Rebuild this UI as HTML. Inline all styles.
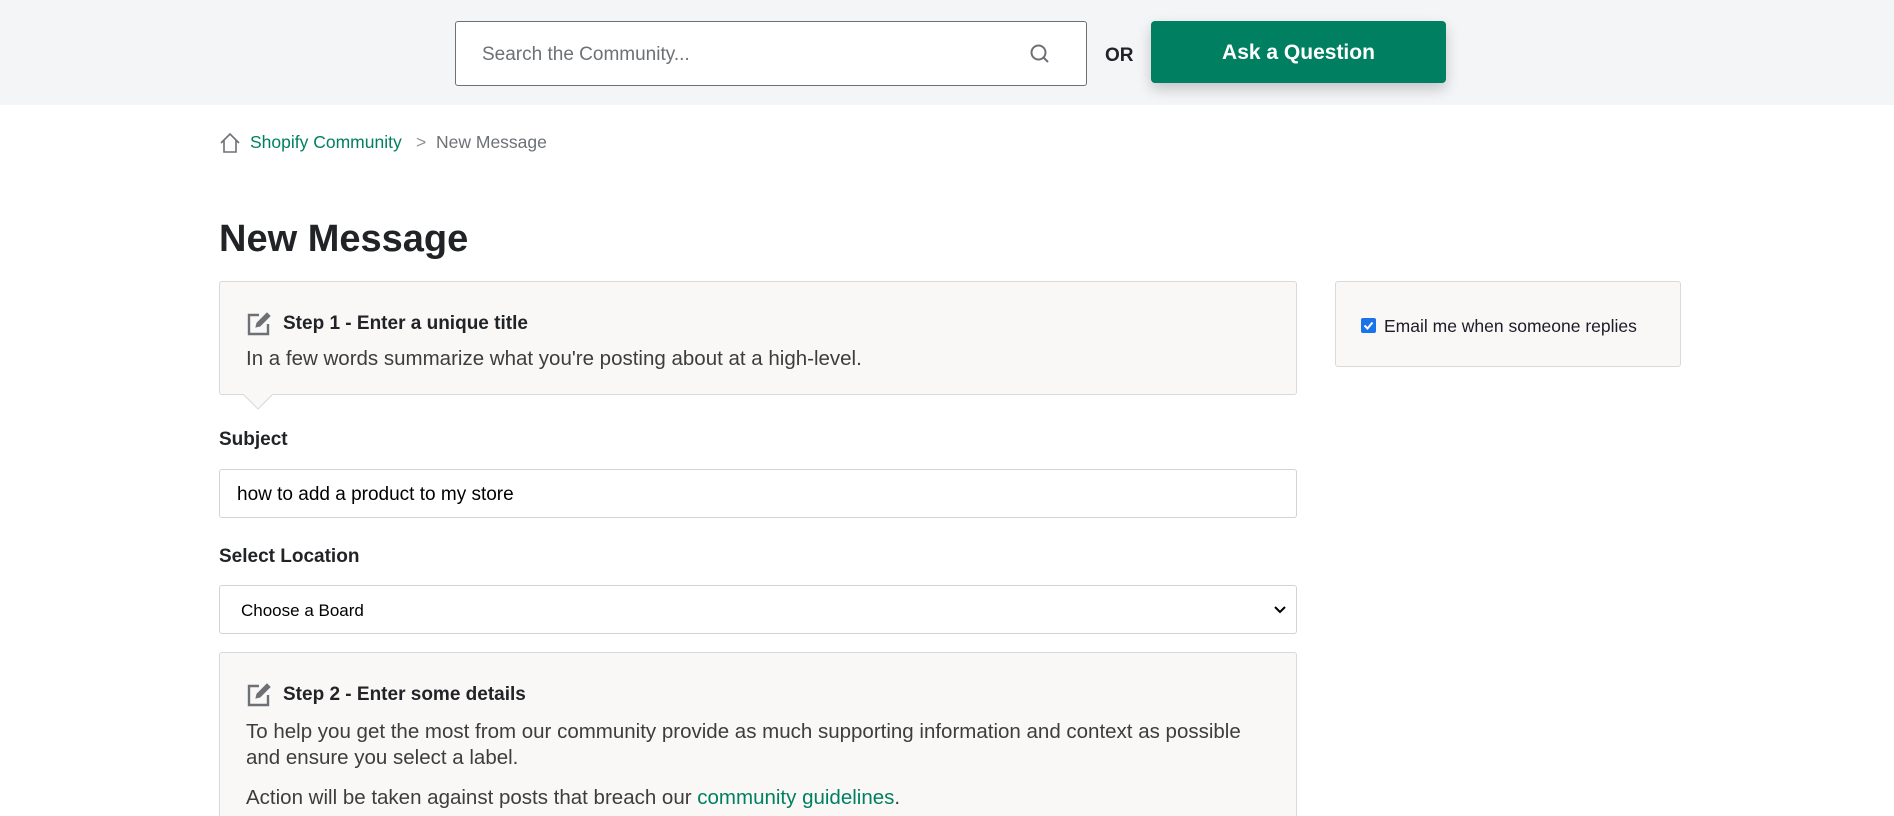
<!DOCTYPE html>
<html style="width:1894px;height:816px;overflow:hidden"><head><meta charset="utf-8"><style>
*{box-sizing:border-box;margin:0;padding:0}
body{width:1894px;height:816px;overflow:hidden;background:#fff;font-family:"Liberation Sans",sans-serif;color:#212326;position:relative}
.top{position:absolute;left:0;top:0;width:1894px;height:105px;background:#f4f5f7}
.search{position:absolute;left:455px;top:21px;width:632px;height:65px;border:1px solid #6d7175;border-radius:3px;background:#fff}
.search span{position:absolute;left:26px;top:22px;font-size:19px;color:#6d7175}
.or{position:absolute;left:1105px;top:45px;font-size:19px;font-weight:bold;color:#212326}
.btn{position:absolute;left:1151px;top:21px;width:295px;height:62px;background:#008060;border-radius:4px;box-shadow:0 6px 14px rgba(0,0,0,.2);color:#fff;font-size:21px;font-weight:bold;text-align:center;line-height:64px}
.bc{position:absolute;left:219px;top:132px;font-size:17.5px}
.bc a{color:#008060;text-decoration:none;position:absolute;left:31px;white-space:nowrap}
.bc .sep{position:absolute;left:197px;color:#8c9196;white-space:nowrap}
.bc .cur{position:absolute;left:217px;color:#6d7175;white-space:nowrap}
h1{position:absolute;left:219px;top:218px;font-size:38px;font-weight:bold;color:#212326}
.box{position:absolute;background:#f9f8f7;border:1px solid #d9d9d9;border-radius:3px}
.step{position:absolute;left:26px;font-size:19px;font-weight:bold;display:flex;align-items:center;gap:11px}
.p{position:absolute;left:26px;font-size:20.5px;color:#3d3d3d;line-height:26px;white-space:nowrap}
.lbl{position:absolute;left:219px;font-size:19px;font-weight:bold}
.inp{position:absolute;left:219px;width:1078px;height:49px;border:1px solid #d3d3d3;border-radius:3px;background:#fff;font-size:19px;padding-left:17px;line-height:49px}
</style></head><body>
<div class="top"></div>
<div class="search"><span>Search the Community...</span>
<svg style="position:absolute;left:572px;top:20px" width="24" height="24" viewBox="0 0 24 24" fill="none" stroke="#6d7175" stroke-width="2"><circle cx="10.5" cy="10.5" r="7"/><path d="M15.5 15.5L20 20"/></svg></div>
<div class="or">OR</div>
<div class="btn">Ask a Question</div>
<div class="bc">
<svg style="position:absolute;left:0;top:0" width="22" height="22" viewBox="0 0 22 22" fill="none" stroke="#6d7175" stroke-width="1.6"><path d="M2 11L11 2l9 9M5 8v12h12V8"/></svg>
<a>Shopify Community</a><span class="sep">&gt;</span><span class="cur">New Message</span></div>
<h1>New Message</h1>
<div class="box" style="left:219px;top:281px;width:1078px;height:114px">
<div class="step" style="top:29px"><svg width="26" height="26" viewBox="0 0 26 26" fill="none" stroke="#6d7175" stroke-width="2.4"><path d="M13 4H3v19h19V13"/><path d="M10 16l1-4 10-10 3 3-10 10z" fill="#6d7175" stroke-width="1"/></svg>Step 1 - Enter a unique title</div>
<div class="p" style="top:64px">In a few words summarize what you're posting about at a high-level.</div>
</div>
<svg style="position:absolute;left:243px;top:394px" width="30" height="18"><path d="M0 0L15 15 30 0" fill="#f9f8f7" stroke="#d9d9d9"/></svg>
<div class="box" style="left:1335px;top:281px;width:346px;height:86px">
<div style="position:absolute;left:25px;top:36px;width:15px;height:15px;background:#1a73e8;border-radius:2px"><svg width="15" height="15"><path d="M3.5 7.5l3 3 5-6" stroke="#fff" stroke-width="2" fill="none"/></svg></div>
<div style="position:absolute;left:48px;top:34px;font-size:17.5px;color:#1c1c28">Email me when someone replies</div>
</div>
<div class="lbl" style="top:429px">Subject</div>
<div class="inp" style="top:469px;color:#000">how to add a product to my store</div>
<div class="lbl" style="top:546px">Select Location</div>
<div class="inp" style="top:585px;font-size:17px;color:#000;padding-left:21px">Choose a Board
<svg style="position:absolute;right:10px;top:19px" width="12" height="10"><path d="M1 2l5 5 5-5" stroke="#000" stroke-width="2" fill="none"/></svg></div>
<div class="box" style="left:219px;top:652px;width:1078px;height:164px;border-bottom:none;border-radius:3px 3px 0 0">
<div class="step" style="top:29px"><svg width="26" height="26" viewBox="0 0 26 26" fill="none" stroke="#6d7175" stroke-width="2.4"><path d="M13 4H3v19h19V13"/><path d="M10 16l1-4 10-10 3 3-10 10z" fill="#6d7175" stroke-width="1"/></svg>Step 2 - Enter some details</div>
<div class="p" style="top:66px">To help you get the most from our community provide as much supporting information and context as possible</div>
<div class="p" style="top:92px">and ensure you select a label.</div>
<div class="p" style="top:132px">Action will be taken against posts that breach our <span style="color:#008060">community guidelines</span>.</div>
</div>
</body></html>
